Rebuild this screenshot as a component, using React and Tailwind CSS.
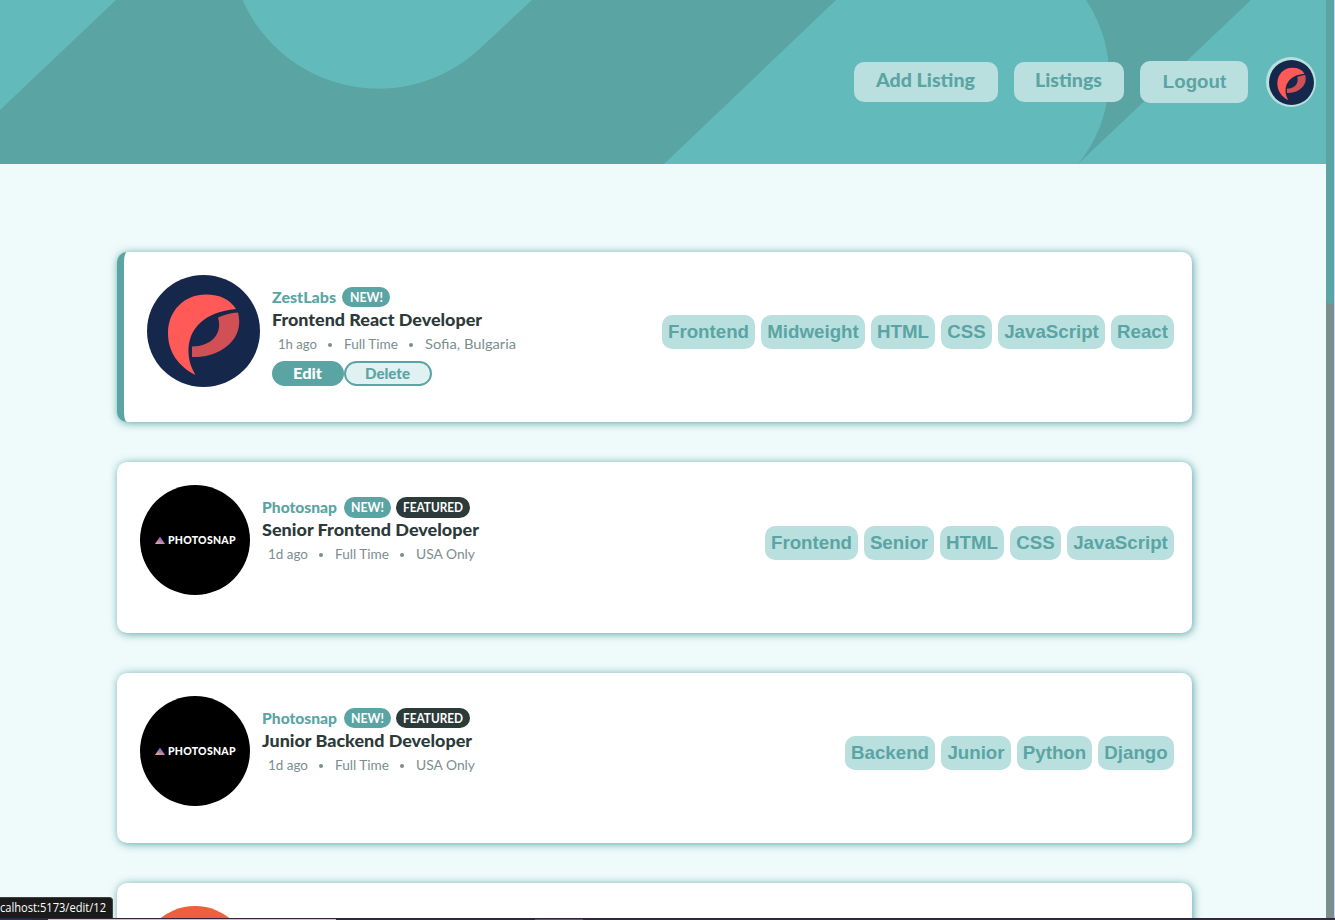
import React from "react";

const BrandMark = ({ className }) => (
  <svg viewBox="0 0 113 112" preserveAspectRatio="none" className={className} aria-hidden="true">
    <ellipse cx="56.5" cy="56" rx="56.5" ry="56" fill="#15284b" />
    <path
      d="M48.5 100 C31 91 21 77 21 58 C21 35 38 19.5 59 19.5 C73 19.5 83 24.500 89 34 C58 37 41 53 41.500 77 C41.700 86 44.500 93 48.500 100Z"
      fill="#ff5a57"
    />
    <path
      d="M71 42.500 C78 39.500 84 38 91 37.500 C95 53 89 66 76 74 C67 80 56 82.500 45 82 V71.500 C64 71.500 76 59 71 42.500Z"
      fill="#d05056"
    />
  </svg>
);

const PhotosnapLogo = () => (
  <svg viewBox="0 0 110 110" className="size-[110px] shrink-0">
    <defs>
      <linearGradient id="snap" x1="0.7" y1="0" x2="0.3" y2="1">
        <stop offset="0" stopColor="#5a63e0" />
        <stop offset="0.5" stopColor="#a274b8" />
        <stop offset="1" stopColor="#f0a58c" />
      </linearGradient>
    </defs>
    <circle cx="55" cy="55" r="55" fill="#000" />
    <path d="M15 59 L20 51.500 L25 59Z" fill="url(#snap)" />
    <text x="28" y="59" fill="#fff" fontFamily="Lato, sans-serif" fontWeight="900" fontSize="10.500" textLength="67.500">
      PHOTOSNAP
    </text>
  </svg>
);

const Tag = ({ children, width }) => (
  <span
    className="flex h-[34px] items-center justify-center rounded-[10px] bg-[#b9e0de] font-['Liberation_Sans',sans-serif] text-[18.72px] font-bold whitespace-nowrap text-[#5ba4a4]"
    style={{ width }}
  >
    {children}
  </span>
);

const Fit = ({ children, width, size, weight, y, className }) => (
  <svg width={width} height="24" className={`block shrink-0 overflow-visible ${className || ""}`}>
    <text x="0" y={y || 17} fill="currentColor" fontSize={size} fontWeight={weight} textLength={width} lengthAdjust="spacingAndGlyphs">
      {children}
    </text>
  </svg>
);

function Card({ own, logo, company, companyWidth, featured, title, titleWidth, meta, tags }) {
  return (
    <article
      className={`flex h-[170.400px] shrink-0 items-start rounded-[10px] bg-white pt-[23px] pr-[18px] pl-[23px] shadow-[1px_1px_8px_0px_#5ba4a4] ${
        own ? "border-l-[7px] border-[#5ba4a4]" : ""
      }`}
    >
      {logo}
      <div className="ml-3 pt-[10px]">
        <div className="flex h-6 items-center text-[#5ba4a4]">
          <Fit width={companyWidth} size="14.500" weight="900" y={17.5}>{company}</Fit>
          <span className={`flex h-[20.500px] items-center justify-center rounded-full bg-[#5ba4a4] text-white ${own ? "ml-[6px] w-12" : "ml-[7px] w-[47px]"}`}>
            <Fit width={33} size="12.500" weight="700" y={17}>NEW!</Fit>
          </span>
          {featured && (
            <span className="ml-[5px] flex h-[20.500px] w-[74px] items-center justify-center rounded-full bg-[#2c3a3a] text-white">
              <Fit width={60} size="12.500" weight="700" y={17}>FEATURED</Fit>
            </span>
          )}
        </div>
        <div className="h-6 text-[#2c3a3a]">
          <Fit width={titleWidth} size="17" weight="900" y={17.25}>{title}</Fit>
        </div>
        <div className="flex h-6 items-center pl-[6px] text-[#7b8e8e]">
          {meta.map(([text, width], i) => (
            <React.Fragment key={text}>
              {i > 0 && <span className="mr-[12px] ml-[11px] size-[4px] rounded-full bg-[#7b8e8e]" />}
              <Fit width={width} size="14" weight="400" y={16}>{text}</Fit>
            </React.Fragment>
          ))}
        </div>
        {own && (
          <div className="mt-[4px] flex">
            <button className="flex h-[25px] w-[72px] items-center justify-center rounded-full bg-[#5ba4a4] pr-px text-white">
              <Fit width={29} size="14.500" weight="900">Edit</Fit>
            </button>
            <button className="flex h-[25px] w-[88px] items-center justify-center rounded-full border-2 border-[#5ba4a4] bg-[#e0f1f1] pr-px text-[#5ba4a4]">
              <Fit width={45} size="14.500" weight="900">Delete</Fit>
            </button>
          </div>
        )}
      </div>
      <div className={`ml-auto flex gap-[6px] ${own ? "mt-10" : "mt-[40.500px]"}`}>
        {tags.map(([text, width]) => (
          <Tag key={text} width={width}>{text}</Tag>
        ))}
      </div>
    </article>
  );
}

const photosnapMeta = [["1d ago", 40], ["Full Time", 54], ["USA Only", 59]];

export default function App() {
  return (
    <div className="relative flex h-[920px] w-[1335px] flex-col overflow-hidden bg-[#effafa] font-[Lato,sans-serif]">
      <div className="flex h-[918px] overflow-hidden">
        <div className="flex w-[1326px] shrink-0 flex-col">
          <header className="relative h-[164px] shrink-0 bg-[#5ba4a4]">
            <svg viewBox="0 0 1326 164" className="absolute inset-0 h-[164px] w-[1326px]" fill="#63baba" aria-hidden="true">
              <path d="M0 0H116L0 110Z" />
              <path d="M242.500 0A148.500 148.500 0 0 0 481 47.500L532 0Z" />
              <path d="M836 0H1086A138 138 0 0 1 1078 164H664Z" />
              <path d="M1251 0H1326V164H1078Z" />
            </svg>
            <nav className="relative flex h-full items-center justify-end gap-4 pr-[10px] text-[#5ba4a4]">
              <a className="flex h-10 w-[144px] items-center justify-center rounded-[10px] bg-[#b9e0de] pr-px">
                <Fit width={99} size="18" weight="900" y={17.25}>Add Listing</Fit>
              </a>
              <a className="flex h-10 w-[110px] items-center justify-center rounded-[10px] bg-[#b9e0de] pr-px">
                <Fit width={67} size="18" weight="900" y={17.25}>Listings</Fit>
              </a>
              <a className="flex h-[42px] w-[108px] items-center justify-center rounded-[10px] bg-[#b9e0de] pl-px font-['Liberation_Sans',sans-serif] text-[18.72px] font-bold">
                Logout
              </a>
              <span className="ml-[2px] size-[50px] rounded-full bg-[#b9e0de] p-[2.500px]">
                <BrandMark className="size-[45px]" />
              </span>
            </nav>
          </header>
          <main className="mt-[88px] ml-[117px] flex w-[1075px] flex-col gap-10">
            <Card
              own
              logo={<BrandMark className="h-[112px] w-[113px] shrink-0" />}
              company="ZestLabs"
              companyWidth={64}
              title="Frontend React Developer"
              titleWidth={210}
              meta={[["1h ago", 39], ["Full Time", 54], ["Sofia, Bulgaria", 91]]}
              tags={[["Frontend", 93], ["Midweight", 104], ["HTML", 64], ["CSS", 51], ["JavaScript", 107], ["React", 63]]}
            />
            <Card
              featured
              logo={<PhotosnapLogo />}
              company="Photosnap"
              companyWidth={75}
              title="Senior Frontend Developer"
              titleWidth={217}
              meta={photosnapMeta}
              tags={[["Frontend", 93], ["Senior", 70], ["HTML", 64], ["CSS", 51], ["JavaScript", 107]]}
            />
            <Card
              featured
              logo={<PhotosnapLogo />}
              company="Photosnap"
              companyWidth={75}
              title="Junior Backend Developer"
              titleWidth={210}
              meta={photosnapMeta}
              tags={[["Backend", 90], ["Junior", 70], ["Python", 75], ["Django", 76]]}
            />
            <article className="h-[170px] shrink-0 rounded-[10px] bg-white pt-[23px] pl-[23px] shadow-[1px_1px_8px_0px_#5ba4a4]">
              <div className="size-[110px] rounded-full bg-[#ee5f3c]" />
            </article>
          </main>
        </div>
        <div className="h-full w-2 bg-[#7b8e8e]">
          <div className="h-[304px] rounded-b-full bg-[#5ba4a4]" />
        </div>
        <div className="w-px bg-[#c9d4f0]" />
      </div>
      <div className="h-px bg-[#33243c]" />
      <div className="flex h-px bg-[#2a2f38]">
        <div className="w-[34px] bg-[#183a5c]" />
        <div className="ml-[14px] w-[288px] bg-[#c9c2c8]" />
        <div className="ml-[199px] w-12 bg-[#5f5a66]" />
      </div>
      <div className="absolute top-[897px] left-0 flex h-[21px] w-[113px] items-center justify-end rounded-tr-[4px] border-t border-r border-[#3c4141] bg-[#1b1b1b] pr-[6px] text-white">
        <Fit width={106} size="12" weight="400" y={16} className="font-['Open_Sans',sans-serif]">calhost:5173/edit/12</Fit>
      </div>
    </div>
  );
}
